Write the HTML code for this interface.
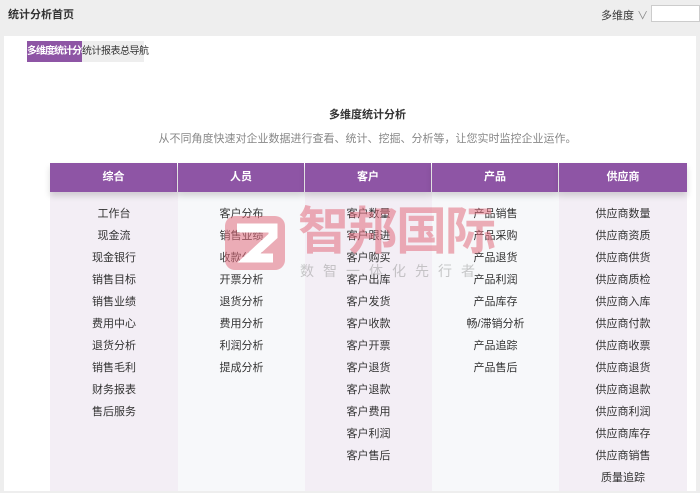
<!DOCTYPE html>
<html><head><meta charset="utf-8"><style>
*{margin:0;padding:0;box-sizing:border-box}
body{width:700px;height:493px;background:#eeeeee;font-family:"Liberation Sans","Noto Sans CJK SC",sans-serif;font-size:11px;color:#333;position:relative;overflow:hidden}
.abs{position:absolute;white-space:nowrap}
.panel{left:4px;top:36px;width:692px;height:455px;background:#fff}
.col{position:absolute;top:192px;height:299px;text-align:center}
.hd{position:absolute;top:163px;height:29px;background:#8e55a5;color:#fff;font-weight:bold;text-align:center;line-height:29px;font-size:11px;box-shadow:0 4px 6px rgba(0,0,0,.15)}
.col div{height:22px;line-height:22px;color:#333}
.items{padding-top:11px}
</style></head><body>
<div class="abs" style="left:8px;top:6px;font-weight:bold;font-size:11px">统计分析首页</div>
<div class="abs" style="left:601px;top:7px;font-size:11px">多维度 <span style="color:#888">∨</span></div>
<div class="abs" style="left:651px;top:5px;width:49px;height:17px;background:#fff;border:1px solid #ccc"></div>
<div class="abs panel"></div>
<div class="abs" style="left:27px;top:41px;width:55px;height:21px;background:#8e55a5;color:#fff;font-weight:bold;line-height:21px;text-align:center;font-size:10px;letter-spacing:-1px">多维度统计分析</div>
<div class="abs" style="left:82px;top:41px;width:62px;height:21px;background:#eee;line-height:21px;text-align:center;font-size:10px;letter-spacing:-0.5px">统计报表总导航</div>
<div class="abs" style="left:0;width:735px;top:106px;text-align:center;font-weight:bold;font-size:11px">多维度统计分析</div>
<div class="abs" style="left:0;width:735px;top:130px;text-align:center;color:#888;font-size:11px">从不同角度快速对企业数据进行查看、统计、挖掘、分析等，让您实时监控企业运作。</div>

<div class="col" style="left:50px;width:128px;background:#f3eef5"><div class="items"><div>工作台</div><div>现金流</div><div>现金银行</div><div>销售目标</div><div>销售业绩</div><div>费用中心</div><div>退货分析</div><div>销售毛利</div><div>财务报表</div><div>售后服务</div></div></div>
<div class="col" style="left:178px;width:127px;background:#f7f8fa"><div class="items"><div>客户分布</div><div>销售业绩</div><div>收款分析</div><div>开票分析</div><div>退货分析</div><div>费用分析</div><div>利润分析</div><div>提成分析</div></div></div>
<div class="col" style="left:305px;width:127px;background:#f3eef5"><div class="items"><div>客户数量</div><div>客户跟进</div><div>客户购买</div><div>客户出库</div><div>客户发货</div><div>客户收款</div><div>客户开票</div><div>客户退货</div><div>客户退款</div><div>客户费用</div><div>客户利润</div><div>客户售后</div></div></div>
<div class="col" style="left:432px;width:127px;background:#f7f8fa"><div class="items"><div>产品销售</div><div>产品采购</div><div>产品退货</div><div>产品利润</div><div>产品库存</div><div>畅/滞销分析</div><div>产品追踪</div><div>产品售后</div></div></div>
<div class="col" style="left:559px;width:128px;background:#f3eef5"><div class="items"><div>供应商数量</div><div>供应商资质</div><div>供应商供货</div><div>供应商质检</div><div>供应商入库</div><div>供应商付款</div><div>供应商收票</div><div>供应商退货</div><div>供应商退款</div><div>供应商利润</div><div>供应商库存</div><div>供应商销售</div><div>质量追踪</div></div></div>

<div class="hd" style="left:50px;width:127px">综合</div>
<div class="hd" style="left:178px;width:126px">人员</div>
<div class="hd" style="left:305px;width:126px">客户</div>
<div class="hd" style="left:432px;width:126px">产品</div>
<div class="hd" style="left:559px;width:128px">供应商</div>

<svg class="abs" style="left:225px;top:216px" width="60" height="54" viewBox="0 0 60 54"><rect x="0" y="0" width="60" height="54" rx="10" fill="rgba(225,110,125,0.55)"/><path d="M12 12H48V20L24 42H48" fill="none" stroke="#fff" stroke-width="9"/></svg>
<div class="abs" style="left:298px;top:204px;font-size:51px;font-weight:bold;color:rgba(225,110,125,0.55);letter-spacing:-2px;line-height:56px">智邦国际</div>
<div class="abs" style="left:300px;top:261px;font-size:14px;color:rgba(150,150,150,0.5);letter-spacing:9px">数智一体化先行者</div>
</body></html>
